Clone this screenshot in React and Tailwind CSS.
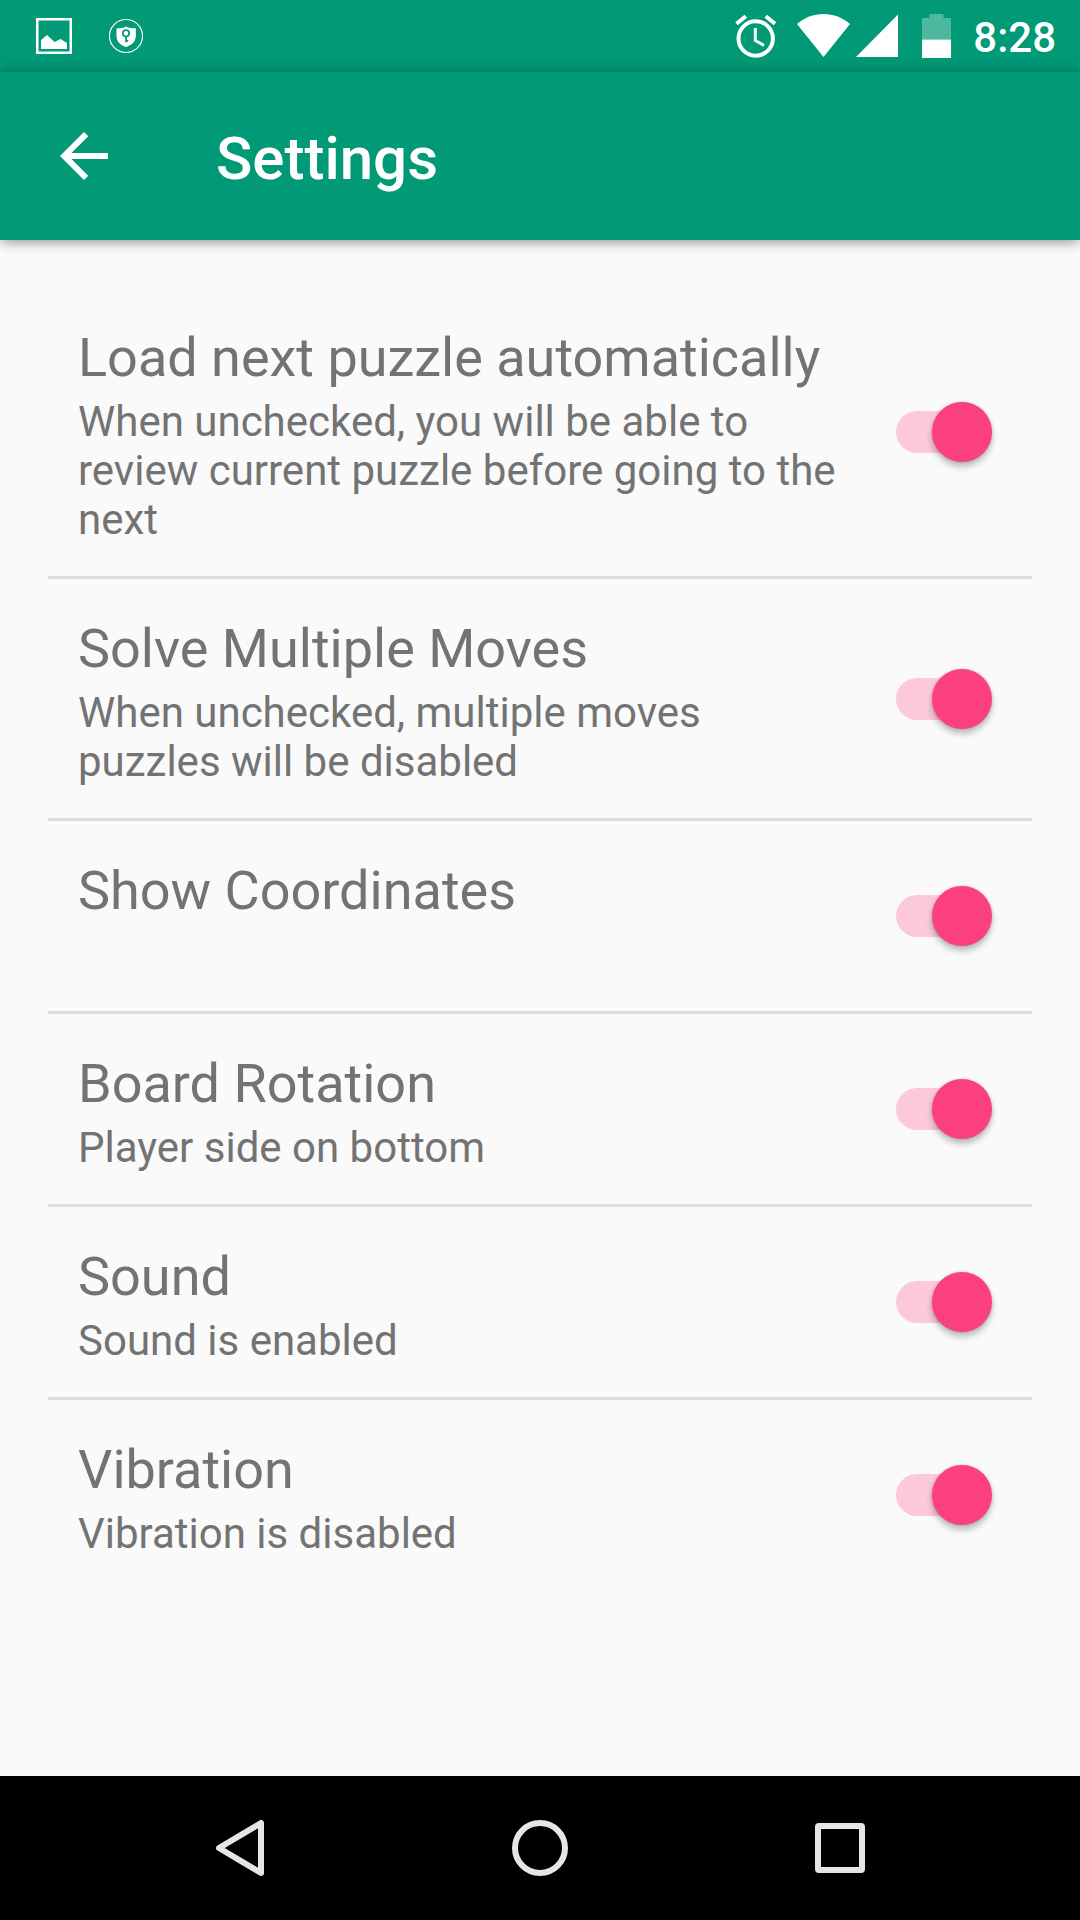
import { useState } from "react";

const SETTINGS = [
  {
    id: "auto-next",
    title: "Load next puzzle automatically",
    summary: "When unchecked, you will be able to review current puzzle before going to the next",
  },
  {
    id: "multiple-moves",
    title: "Solve Multiple Moves",
    summary: "When unchecked, multiple moves puzzles will be disabled",
  },
  { id: "coordinates", title: "Show Coordinates", summary: "" },
  { id: "rotation", title: "Board Rotation", summary: "Player side on bottom" },
  { id: "sound", title: "Sound", summary: "Sound is enabled" },
  { id: "vibration", title: "Vibration", summary: "Vibration is disabled" },
];

function StatusBar() {
  return (
    <div className="flex h-18 items-center justify-between bg-[#029976] pr-6 pl-9 text-white">
      <div className="flex items-center gap-9">
        <svg className="size-9" viewBox="0 0 36 36" aria-hidden="true">
          <rect x="1.25" y="1.25" width="33.5" height="33.5" fill="none" stroke="currentColor" strokeWidth="2.5" />
          <path d="M5 22L11 17L18.500 24L24.500 21L31 25V31H5Z" fill="currentColor" />
        </svg>
        <svg className="size-9" viewBox="0 0 36 36" aria-hidden="true">
          <circle cx="18" cy="18" r="16.500" fill="none" stroke="currentColor" strokeWidth="1.200" />
          <path
            fill="currentColor"
            fillRule="evenodd"
            d="M18 8.500C15.500 10 12 10.300 8.500 10.300V18C8.500 24 12.500 27 18 29C23.500 27 27.800 24 27.800 18V10.300C24 10.300 20.500 10 18 8.500Z"
          />
          <circle cx="18" cy="15.300" r="3.200" fill="none" stroke="#029976" strokeWidth="1.700" />
          <path d="M18 18.500V24.300M18 22.800H20.200" fill="none" stroke="#029976" strokeWidth="1.800" />
        </svg>
      </div>
      <div className="flex items-center">
        <svg className="mr-5 h-11 w-[42px]" viewBox="0 0 42 44" fill="none" stroke="currentColor" aria-hidden="true">
          <circle cx="20.700" cy="24.500" r="17.200" strokeWidth="4" />
          <path d="M20.300 14V26.500L29 31.500" strokeWidth="3" />
          <path d="M1.500 9.800L10.800 2.200M30.800 2.200L40 9.800" strokeWidth="4" />
        </svg>
        <svg className="mr-1.5 h-11 w-[53px]" viewBox="0 0 53 44" fill="currentColor" aria-hidden="true">
          <path d="M0 10C7.500 3.500 16.500 0 26.500 0S45.500 3.500 53 10L26.500 43Z" />
        </svg>
        <svg className="mr-6 h-11 w-[42px]" viewBox="0 0 42 44" fill="currentColor" aria-hidden="true">
          <path d="M42 0.500V43H0Z" />
        </svg>
        <svg className="mr-[22px] h-11 w-[29px]" viewBox="0 0 29 44" fill="currentColor" aria-hidden="true">
          <path opacity="0.3" d="M7.500 0H21.500V4H29V25.500H0V4H7.500Z" />
          <path d="M0 25.500H29V44H0Z" />
        </svg>
        <span className="pt-1 text-[42px] leading-[50px] font-medium">8:28</span>
      </div>
    </div>
  );
}

function Toolbar() {
  return (
    <header className="relative z-10 flex h-42 items-center gap-24 bg-[#029976] px-12 text-white shadow-[0_6px_12px_-2px_rgba(0,0,0,0.18),0_0_12px_-1px_rgba(0,0,0,0.35)]">
      <button type="button" aria-label="Back">
        <svg className="size-18" viewBox="0 0 24 24" fill="currentColor" aria-hidden="true">
          <path d="M20 11H7.830l5.590-5.590L12 4l-8 8 8 8 1.410-1.410L7.830 13H20v-2z" />
        </svg>
      </button>
      <h1 className="pt-1.5 text-[60px] leading-[70px] font-medium">Settings</h1>
    </header>
  );
}

function Toggle({ id, checked, onChange }) {
  return (
    <span className="relative flex h-15 w-24 shrink-0 items-center">
      <input
        id={id}
        type="checkbox"
        role="switch"
        checked={checked}
        onChange={onChange}
        className="peer h-[42px] w-[90px] cursor-pointer appearance-none rounded-full bg-[#c7c7c7] checked:bg-[#fbc9da]"
      />
      <span className="pointer-events-none absolute top-0 left-0 size-15 rounded-full bg-[#f1f1f1] shadow-[0_5px_6px_rgba(0,0,0,0.24),0_0_3px_rgba(0,0,0,0.2)] peer-checked:right-0 peer-checked:left-auto peer-checked:bg-[#fc407e]" />
    </span>
  );
}

function SettingRow({ setting }) {
  const [checked, setChecked] = useState(true);
  return (
    <li className="flex items-center gap-15 border-b-3 border-[#dcdcdc] pr-10 pl-[30px] last:border-b-0">
      <label htmlFor={setting.id} className="flex-1 pt-[38px] pb-8">
        <span className="block text-[54px] leading-[63px]">{setting.title}</span>
        <span className="mt-2 block min-h-[49px] text-[42px] leading-[49px]">{setting.summary}</span>
      </label>
      <Toggle id={setting.id} checked={checked} onChange={(e) => setChecked(e.target.checked)} />
    </li>
  );
}

function NavBar() {
  return (
    <nav className="flex h-36 items-center bg-black px-[90px] text-[#e6e6e6]">
      <button type="button" aria-label="Back" className="flex flex-1 justify-center">
        <svg className="size-15" viewBox="0 0 60 60" fill="none" stroke="currentColor" strokeWidth="6" strokeLinejoin="round" aria-hidden="true">
          <path d="M51 5V55L9 30Z" />
        </svg>
      </button>
      <button type="button" aria-label="Home" className="flex flex-1 justify-center">
        <svg className="size-15" viewBox="0 0 60 60" fill="none" stroke="currentColor" strokeWidth="6" aria-hidden="true">
          <circle cx="30" cy="30" r="25" />
        </svg>
      </button>
      <button type="button" aria-label="Recent apps" className="flex flex-1 justify-center">
        <svg className="size-15" viewBox="0 0 60 60" fill="none" stroke="currentColor" strokeWidth="6" aria-hidden="true">
          <rect x="8" y="8" width="44" height="44" rx="1" />
        </svg>
      </button>
    </nav>
  );
}

export default function App() {
  return (
    <div className="flex min-h-screen flex-col bg-[#fafafa] font-['Roboto',sans-serif]">
      <StatusBar />
      <Toolbar />
      <main className="flex-1 px-12 pt-12 text-[#737373]">
        <ul>
          {SETTINGS.map((setting) => (
            <SettingRow key={setting.id} setting={setting} />
          ))}
        </ul>
      </main>
      <NavBar />
    </div>
  );
}
